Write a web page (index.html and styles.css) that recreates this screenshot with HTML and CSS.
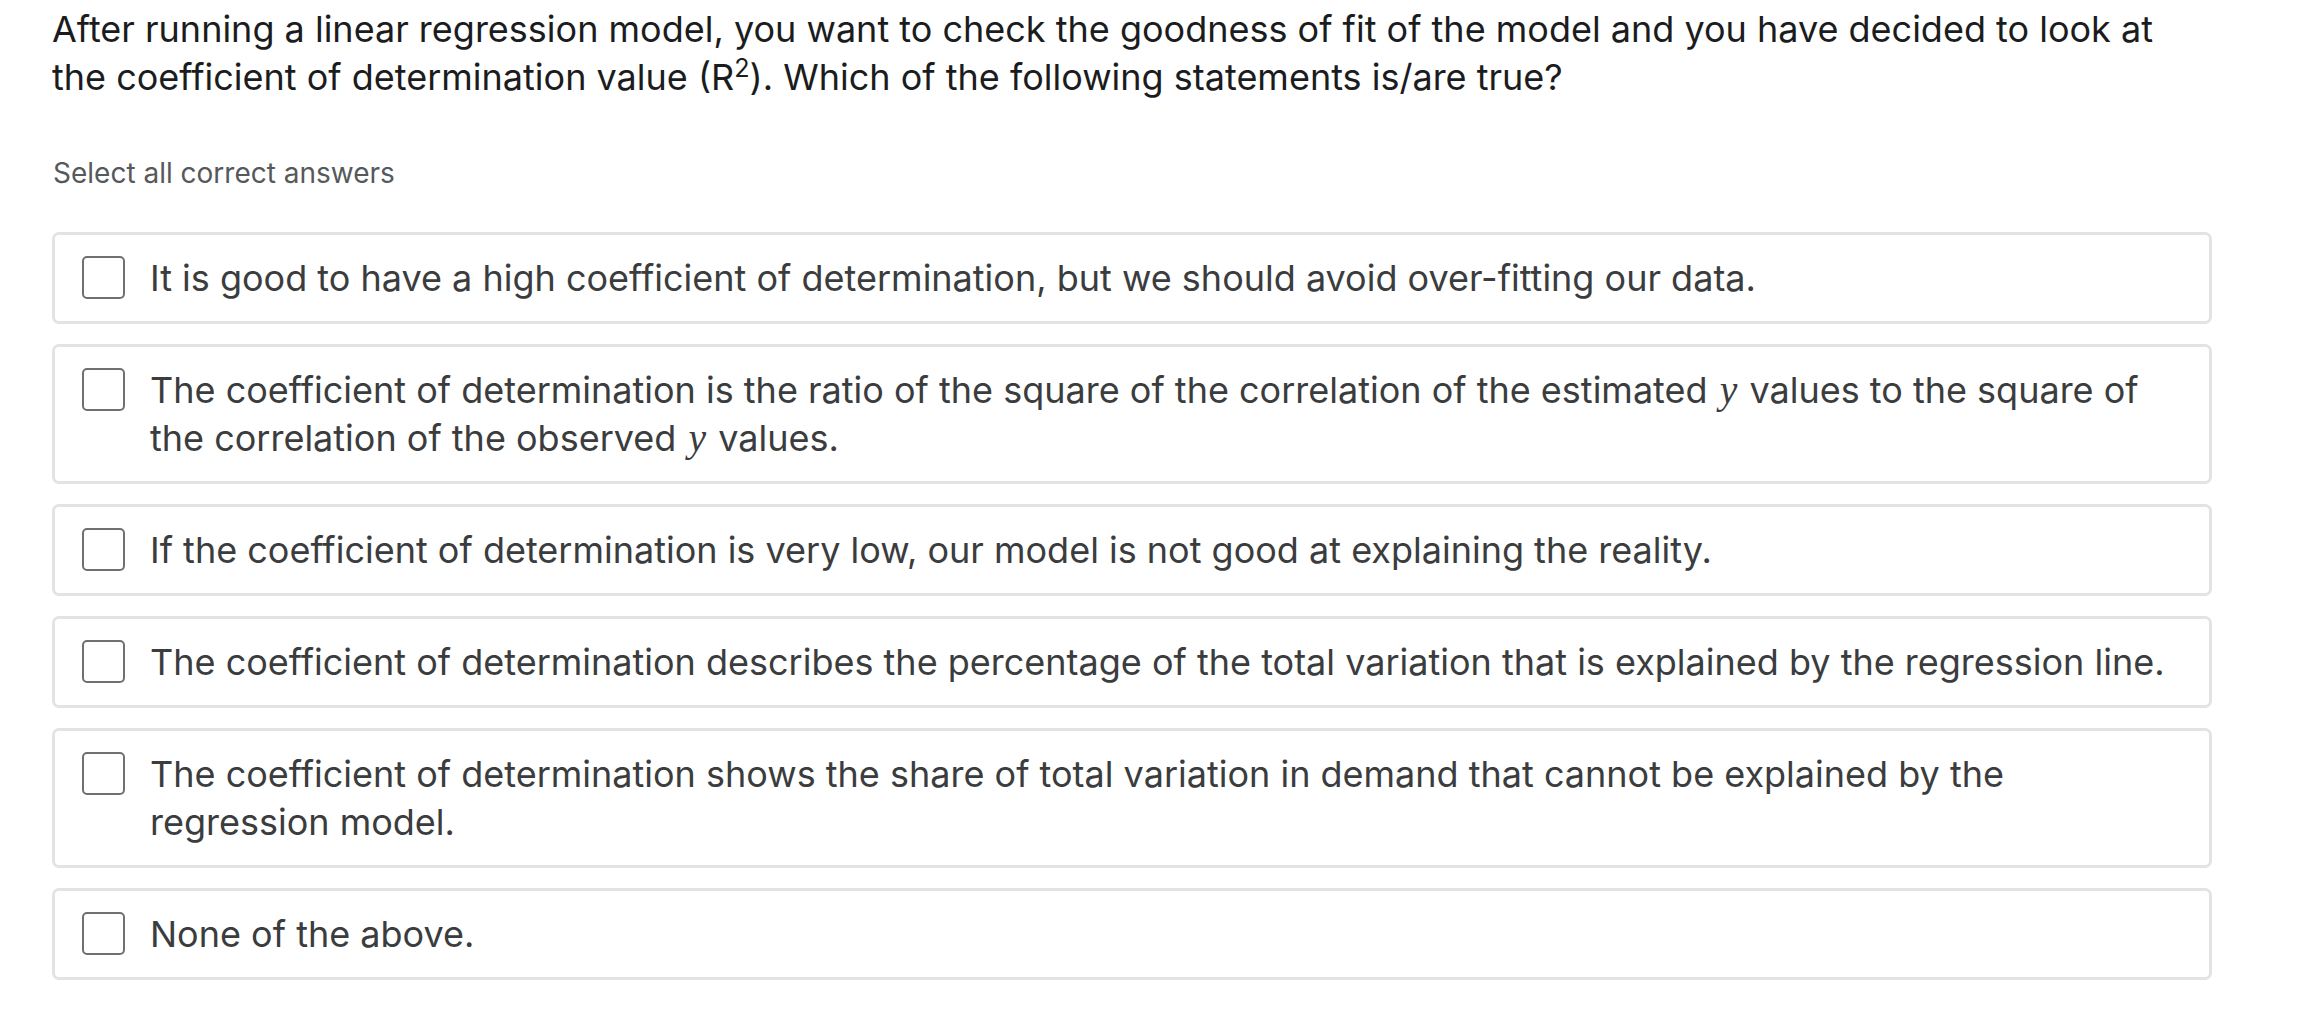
FILE: index.html
```html
<!DOCTYPE html>
<html lang="en">
<head>
<meta charset="utf-8">
<title>Quiz question</title>
<link rel="stylesheet" href="styles.css">
</head>
<body>
<main class="question">
  <p class="prompt">After running a linear regression model, you want to check the goodness of fit of the model and you have decided to look at the coefficient of determination value (R<sup>2</sup>). Which of the following statements is/are true?</p>
  <p class="hint">Select all correct answers</p>
  <ul class="options">
    <li class="option"><span class="check"></span><span class="label">It is good to have a high coefficient of determination, but we should avoid over-fitting our data.</span></li>
    <li class="option"><span class="check"></span><span class="label">The coefficient of determination is the ratio of the square of the correlation of the estimated <i class="math">y</i> values to the square of the correlation of the observed <i class="math">y</i> values.</span></li>
    <li class="option"><span class="check"></span><span class="label">If the coefficient of determination is very low, our model is not good at explaining the reality.</span></li>
    <li class="option"><span class="check"></span><span class="label">The coefficient of determination describes the percentage of the total variation that is explained by the regression line.</span></li>
    <li class="option"><span class="check"></span><span class="label">The coefficient of determination shows the share of total variation in demand that cannot be explained by the regression model.</span></li>
    <li class="option"><span class="check"></span><span class="label">None of the above.</span></li>
  </ul>
</main>
</body>
</html>
```
FILE: styles.css
```css
html, body {
  margin: 0;
  padding: 0;
  background: #ffffff;
}
body {
  font-family: Inter, "Noto Sans", "Liberation Sans", sans-serif;
}
.question {
  width: 2160px;
  padding: 5px 0 0 52px;
}
.prompt {
  margin: 0;
  font-size: 36px;
  line-height: 48px;
  color: #1b1c1e;
}
.prompt sup {
  font-size: 0.7em;
  line-height: 0;
}
.hint {
  margin: 51px 0 0 1px;
  font-size: 28px;
  line-height: 42px;
  color: #56595c;
}
.options {
  list-style: none;
  margin: 38px 0 0;
  padding: 0;
  display: flex;
  flex-direction: column;
  gap: 20px;
}
.option {
  display: flex;
  align-items: flex-start;
  gap: 25px;
  padding: 19px 24px 19px 27px;
  border: 3px solid #e2e3e5;
  border-radius: 7px;
  background: #ffffff;
}
.check {
  flex: none;
  width: 39px;
  height: 39px;
  margin-top: 2px;
  border: 2px solid #707070;
  border-radius: 5px;
  background: #ffffff;
}
.label {
  font-size: 36px;
  line-height: 48px;
  color: #3b3c3e;
}
.math {
  font-family: "Liberation Serif", "DejaVu Serif", serif;
  font-style: italic;
  font-size: 1.1em;
  padding: 0 2px;
}
```
